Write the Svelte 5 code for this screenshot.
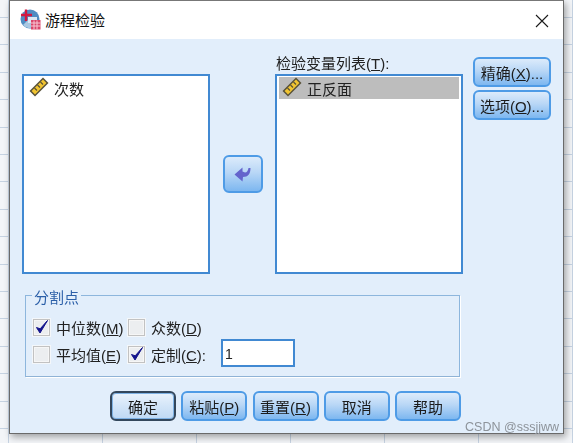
<script>
  const bottomButtons = [
    { label: "确定", primary: true },
    { label: "粘贴", key: "P" },
    { label: "重置", key: "R" },
    { label: "取消" },
    { label: "帮助" },
  ];
</script>

{#snippet ruler()}
  <svg class="ruler" width="20" height="20" viewBox="0 0 20 20">
    <path d="M0.5 14 L14 0.5 L19.5 6 L6 19.5 Z" fill="#59523a" />
    <path d="M2.6 14 L14 2.6 L17.4 6 L6 17.4 Z" fill="#f2c531" />
    <path d="M5.5 11 l2.5 2.5 M8.5 8 l2.5 2.5 M11.5 5 l2.5 2.5" stroke="#59523a" stroke-width="1.2" fill="none" />
  </svg>
{/snippet}

{#snippet check(on)}
  <span class="check">
    {#if on}
      <svg width="17" height="17" viewBox="0 0 17 17">
        <path d="M3.5 8.5 L7 14 L14.5 1.5 L7.2 9.8 Z" fill="#14148c" stroke="#14148c" stroke-width="1" />
      </svg>
    {/if}
  </span>
{/snippet}

<div class="window">
  <header class="titlebar">
    <div class="title">
      <svg width="21" height="21" viewBox="0 0 21 21">
        <circle cx="10" cy="10" r="9.5" fill="#4f8cc2" />
        <path d="M3 16 A9 9 0 0 0 16 17 L9 10 Z" fill="#a9c8e2" />
        <rect x="8" y="8" width="9" height="6" fill="#dbe8f3" />
        <path d="M1 6 H12 M6 0.5 V12" stroke="#d3173f" stroke-width="2.4" />
        <rect x="11" y="11" width="9.5" height="9.5" fill="#d9476b" />
        <path d="M11 14 H20.5 M11 17 H20.5 M14 11.5 V20.5 M17 11.5 V20.5" stroke="#f7c9d5" stroke-width="1" />
      </svg>
      <span>游程检验</span>
    </div>
    <svg class="close" width="14" height="14" viewBox="0 0 14 14">
      <path d="M1 1 L13 13 M13 1 L1 13" stroke="#1a1a1a" stroke-width="1.1" />
    </svg>
  </header>

  <div class="client">
    <div class="top">
      <div class="listcol">
        <div class="list">
          <div class="item">{@render ruler()}<span>次数</span></div>
        </div>
      </div>

      <div class="movecol">
        <button class="btn move" aria-label="移动">
          <svg width="20" height="18" viewBox="0 0 20 18">
            <path d="M1.5 9.5 L9.5 2.5 V6.5 L12 7.5 C14 7.5 15 5.5 15.5 3 L17.5 3 C17.5 9 15 12 10 12 L9.5 16.5 Z" fill="#6464cc" />
          </svg>
        </button>
      </div>

      <div class="listcol target">
        <div class="label">检验变量列表(<u>T</u>):</div>
        <div class="list">
          <div class="item selected">{@render ruler()}<span>正反面</span></div>
        </div>
      </div>

      <div class="sidecol">
        <button class="btn side">精确(<u>X</u>)...</button>
        <button class="btn side">选项(<u>O</u>)...</button>
      </div>
    </div>

    <fieldset class="group">
      <legend>分割点</legend>
      <div class="grouprow">
        <label class="opt first">{@render check(true)}<span>中位数(<u>M</u>)</span></label>
        <label class="opt">{@render check(false)}<span>众数(<u>D</u>)</span></label>
      </div>
      <div class="grouprow">
        <label class="opt first">{@render check(false)}<span>平均值(<u>E</u>)</span></label>
        <label class="opt second">{@render check(true)}<span>定制(<u>C</u>):</span></label>
        <span class="input">1</span>
      </div>
    </fieldset>

    <div class="actions">
      {#each bottomButtons as b}
        <button class="btn action" class:primary={b.primary}>
          {b.label}{#if b.key}(<u>{b.key}</u>){/if}
        </button>
      {/each}
    </div>
  </div>

  <span class="watermark">CSDN @sssjjww</span>
</div>

<style>
  :global(body) {
    margin: 0;
    width: 573px;
    height: 443px;
    overflow: hidden;
    background-color: #f3f5f8;
    background-image:
      repeating-linear-gradient(to right, transparent 0 8px, #c6d3e2 8px 9px, transparent 9px 94px),
      repeating-linear-gradient(to bottom, transparent 0 17px, #c6d3e2 17px 18px, transparent 18px 27.4px);
    font-family: "Liberation Sans", "Noto Sans CJK SC", sans-serif;
    color: #1c1c1c;
  }

  .window {
    position: relative;
    box-sizing: border-box;
    margin-left: 9px;
    width: 555px;
    height: 434px;
    display: flex;
    flex-direction: column;
    background: #e2eefb;
    border: 1px solid #6a6a6a;
    border-top-color: #777;
    box-shadow: 2px 3px 7px rgba(0, 0, 0, 0.35);
    filter: blur(0.3px);
  }

  .titlebar {
    flex: none;
    height: 38px;
    background: #fff;
    display: flex;
    align-items: center;
    justify-content: space-between;
    padding: 0 14px 0 10px;
  }

  .title {
    display: flex;
    align-items: center;
    gap: 4px;
    font-size: 15px;
    color: #111;
    margin-top: -1px;
  }

  .close {
    margin-top: 1px;
  }

  .client {
    flex: 1;
    display: flex;
    flex-direction: column;
    padding: 16px 0 0 12px;
  }

  .top {
    display: flex;
    height: 219px;
  }

  .listcol {
    width: 188px;
    display: flex;
    flex-direction: column;
    justify-content: flex-end;
  }

  .label {
    font-size: 15px;
    line-height: 18px;
    height: 19px;
    color: #222;
    margin-left: 1px;
  }

  .list {
    box-sizing: border-box;
    height: 200px;
    background: #fff;
    border: 2px solid #4189d2;
    padding: 1px 2px;
  }

  .item {
    display: flex;
    align-items: center;
    gap: 3px;
    height: 22px;
    padding-left: 3px;
    font-size: 15px;
    color: #222;
  }

  .item span {
    margin-top: 1px;
  }

  .item.selected {
    background: #bdbdbd;
  }

  .ruler {
    flex: none;
    margin-right: 2px;
    margin-top: -2px;
  }

  .movecol {
    width: 65px;
    display: flex;
    align-items: flex-start;
    justify-content: center;
    padding-top: 100px;
    box-sizing: border-box;
  }

  .btn {
    box-sizing: border-box;
    margin: 0;
    padding: 0;
    font: inherit;
    font-size: 15px;
    color: #1c1c1c;
    white-space: nowrap;
    border: 2px solid #4e9be6;
    border-radius: 6px;
    background: linear-gradient(to bottom, #dcebfb 0%, #b9d7f6 45%, #7db7f0 100%);
  }

  .move {
    width: 40px;
    height: 38px;
    display: flex;
    align-items: center;
    justify-content: center;
  }

  .sidecol {
    margin-left: 10px;
    padding-top: 2px;
    display: flex;
    flex-direction: column;
    gap: 3px;
  }

  .side {
    width: 78px;
    height: 30px;
  }

  .group {
    box-sizing: border-box;
    width: 435px;
    height: 93px;
    margin: 10px 0 0 3px;
    padding: 7px 0 0 7px;
    border: 1px solid #8db6dd;
    border-bottom-color: #8fb3d6;
    box-shadow: 1px 1px 0 #fff;
    min-width: 0;
  }

  legend {
    margin-left: -1px;
    padding: 6px 2px 0;
    font-size: 15px;
    line-height: 16px;
    color: #2b5fa8;
  }

  .grouprow {
    display: flex;
    align-items: center;
    height: 27px;
    font-size: 15px;
    color: #222;
  }

  .opt {
    display: flex;
    align-items: center;
  }

  .opt span {
    margin-top: 1px;
  }

  .opt.first {
    width: 95px;
  }

  .opt.second {
    width: 93px;
  }

  .check {
    flex: none;
    box-sizing: border-box;
    width: 17px;
    height: 17px;
    margin-right: 6px;
    margin-top: -2px;
    background: #eceef0;
    border: 1px solid #c2c2c2;
    box-shadow: 0 0 0 1px #f4f7fa, inset 0 0 0 1px #f6f6f6;
    display: flex;
  }

  .check svg {
    flex: none;
    margin: -1px;
  }

  .input {
    box-sizing: border-box;
    width: 74px;
    height: 28px;
    margin-top: -2px;
    padding: 3px 0 0 2px;
    background: #fff;
    border: 2px solid #4189d2;
    font-size: 14px;
    line-height: 20px;
  }

  .actions {
    display: flex;
    gap: 5.25px;
    margin: 14px 0 0 88px;
  }

  .action {
    width: 66px;
    height: 30px;
  }

  .action.primary {
    border-color: #33475c;
    background: linear-gradient(to bottom, #eaf3fc 0%, #d3e5f8 50%, #bfd9f4 100%);
    box-shadow: inset 0 0 0 1px #7fb2e4;
  }

  .watermark {
    position: absolute;
    right: 4px;
    bottom: -1px;
    font-size: 12.5px;
    line-height: 14px;
    color: #8d939a;
  }
</style>
